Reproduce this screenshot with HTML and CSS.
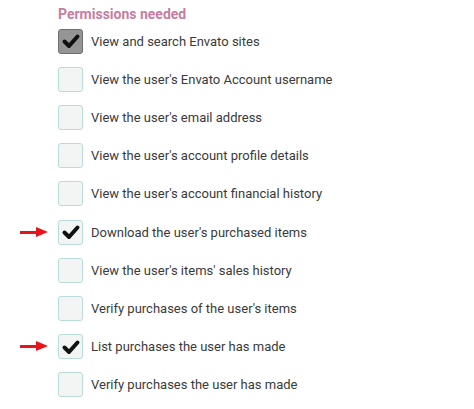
FILE: index.html
```html
<!DOCTYPE html>
<html lang="en">

<head>
    <meta charset="UTF-8">
    <meta name="viewport" content="width=device-width, initial-scale=1.0">
    <title>Permissions</title>
    <link rel="stylesheet" href="styles.css">
</head>

<body>
    <div class="permissions">
        <h4>Permissions needed</h4>

        <ul class="perm-list">
            <li class="perm locked">
                <span class="box"><svg viewBox="0 0 20 20"><path d="M3.5 10.5 L8 15 L16.5 5.5"/></svg></span>
                View and search Envato sites
            </li>
            <li class="perm">
                <span class="box"></span>
                View the user's Envato Account username
            </li>
            <li class="perm">
                <span class="box"></span>
                View the user's email address
            </li>
            <li class="perm">
                <span class="box"></span>
                View the user's account profile details
            </li>
            <li class="perm">
                <span class="box"></span>
                View the user's account financial history
            </li>
            <li class="perm">
                <span class="arrow"></span>
                <span class="box"><svg viewBox="0 0 20 20"><path d="M3.5 10.5 L8 15 L16.5 5.5"/></svg></span>
                Download the user's purchased items
            </li>
            <li class="perm">
                <span class="box"></span>
                View the user's items' sales history
            </li>
            <li class="perm">
                <span class="box"></span>
                Verify purchases of the user's items
            </li>
            <li class="perm">
                <span class="arrow"></span>
                <span class="box"><svg viewBox="0 0 20 20"><path d="M3.5 10.5 L8 15 L16.5 5.5"/></svg></span>
                List purchases the user has made
            </li>
            <li class="perm">
                <span class="box"></span>
                Verify purchases the user has made
            </li>
        </ul>
    </div>
</body>

</html>
```

FILE: styles.css
```css
body {
    margin: 0;
    font-family: Roboto, "Liberation Sans", sans-serif;
    background: #fff;
}

.permissions {
    padding: 6px 0 0 58px;
}

.permissions h4 {
    margin: 0;
    font-size: 14px;
    line-height: 16px;
    font-weight: 700;
    color: #c47ea2;
}

.perm-list {
    list-style: none;
    margin: 0;
    padding: 0;
}

.perm {
    position: relative;
    display: flex;
    align-items: center;
    height: 38.2px;
    font-size: 13px;
    color: #3a3a3a;
}

.box {
    flex: none;
    width: 23px;
    height: 23px;
    margin-right: 8px;
    border: 1px solid #b9dcda;
    border-radius: 3px;
    background: #f3f5f5;
    display: flex;
    align-items: center;
    justify-content: center;
}

.box svg {
    width: 20px;
    height: 20px;
    fill: none;
    stroke: #111;
    stroke-width: 4;
    stroke-linecap: round;
    stroke-linejoin: round;
}

.locked .box {
    background: #959595;
    border-color: #6f6f6f;
}

.arrow {
    position: absolute;
    left: -38px;
    top: 50%;
    width: 18px;
    height: 3px;
    margin-top: -1.5px;
    background: #e8141c;
}

.arrow::after {
    content: "";
    position: absolute;
    left: 16px;
    top: -4px;
    border-left: 12px solid #e8141c;
    border-top: 5.5px solid transparent;
    border-bottom: 5.5px solid transparent;
}
```
